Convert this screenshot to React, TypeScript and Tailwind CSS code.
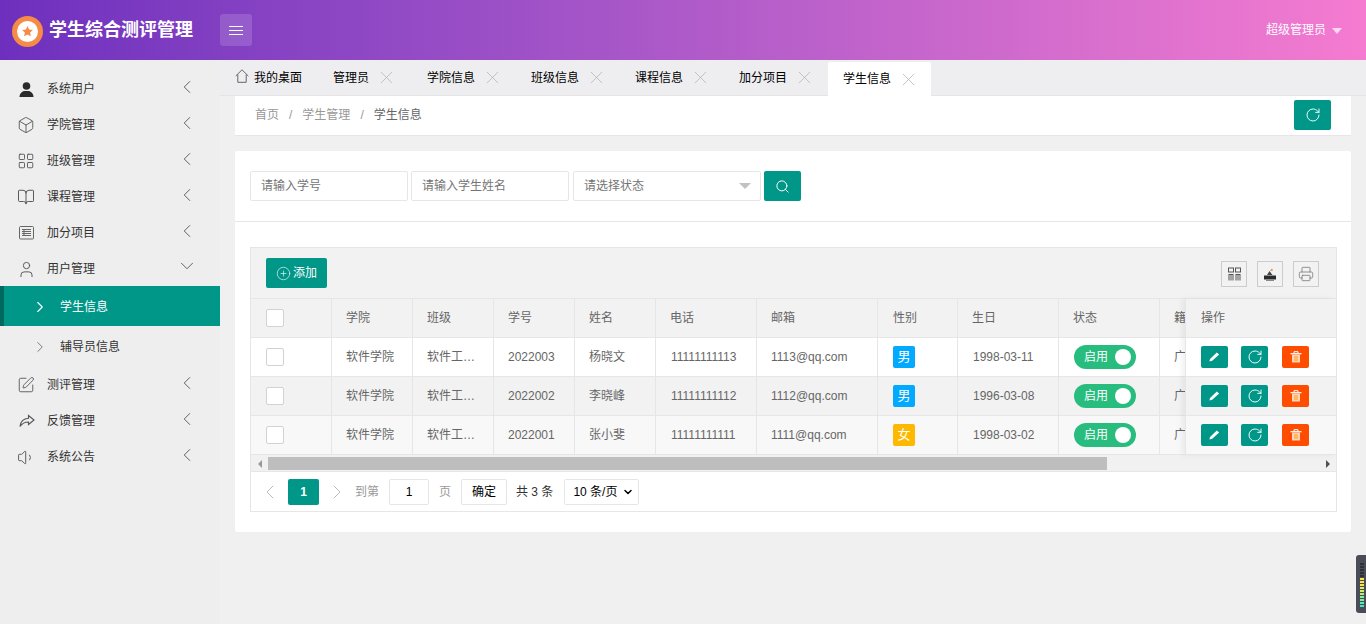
import React from "react";
import { Box, LayoutGrid, BookOpen, User, ChevronLeft, ChevronRight, ChevronDown, SquarePen, Volume1, Search, RotateCw, Printer, CirclePlus, X } from "lucide-react";

const font = "font-['Liberation_Sans','Noto_Sans_CJK_SC',sans-serif]";

function Reply() {
  return (
    <svg width="16" height="16" viewBox="0 0 16 16" fill="none" stroke="#555" strokeWidth="1.1">
      <path d="M9.500 2.500 15 7l-5.500 4.500V9C6 9 3 10.500 1 13.500 1.500 8.500 5 5.500 9.500 5.200z" />
    </svg>
  );
}
function Ledger() {
  return (
    <svg width="15" height="14" viewBox="0 0 15 14" fill="none" stroke="#666" strokeWidth="1">
      <rect x="0.500" y="0.500" width="14" height="12.500" rx="1" />
      <path d="M3 3.500h9M3 5.500h9M3 7.500h9M3 9.500h9M5 3v7" />
    </svg>
  );
}
function SolidUser() {
  return (
    <svg width="15" height="15" viewBox="0 0 15 15" fill="#2b2b2b">
      <circle cx="7.500" cy="4" r="3.800" />
      <path d="M0.500 15c0-3.500 2.500-5.500 4.500-6h5c2 .5 4.500 2.500 4.500 6z" />
    </svg>
  );
}
function Home() {
  return (
    <svg width="14" height="14" viewBox="0 0 14 14" fill="none" stroke="#666" strokeWidth="1">
      <path d="M0.700 7 7 .8 13.300 7M2.800 5.500V13.300H11.200V5.500" />
    </svg>
  );
}
function Cols() {
  return (
    <svg width="13" height="14" viewBox="0 0 13 14" fill="none" stroke="#555" strokeWidth="1">
      <rect x="0.500" y="1" width="5" height="4" />
      <rect x="7.500" y="1" width="5" height="4" />
      <path d="M0.500 7.500h5M7.500 7.500h5M1 8v5.500M3 8v5.500M5 8v5.500M8 8v5.500M10 8v5.500M12 8v5.500" />
    </svg>
  );
}
function Ship() {
  return (
    <svg width="14" height="13" viewBox="0 0 14 13" fill="#2b2b2b">
      <path d="M1 7.500h12v4H1z" />
      <path d="M4 7 6.500 3 9.500 7z" fill="#444" />
      <path d="M7 3 9 0.500l1 2z" fill="#d9822b" />
      <path d="M3 12h8v1H3z" fill="#888" />
    </svg>
  );
}
function Pen() {
  return (
    <svg width="11" height="10" viewBox="0 0 11 10" fill="#fff">
      <path d="M7.800 0.600 10.200 2.600 3.200 8.800 0.400 9.600 1 7z" />
    </svg>
  );
}
function Trash() {
  return (
    <svg width="12" height="12" viewBox="0 0 12 12" fill="none">
      <path d="M0.500 2.700h11" stroke="#fff" strokeWidth="1.200" />
      <path d="M4 2.300V.7h4v1.600" stroke="#fff" />
      <path d="M2 3.500h8V11.500H2z" fill="#ffd3c0" />
      <path d="M4.800 5v5M6 5v5M7.200 5v5" stroke="#ffa914" strokeWidth="0.900" />
    </svg>
  );
}
function Logo() {
  return (
    <svg width="31" height="31" viewBox="0 0 31 31" className="mt-[2px]">
      <circle cx="15.500" cy="15.500" r="15.500" fill="#f58b45" />
      <circle cx="15.500" cy="15.500" r="10.500" fill="#fff" />
      <path d="M15.500 10l1.600 3.500 3.800.4-2.800 2.600.8 3.800-3.400-1.900-3.400 1.900.8-3.800-2.800-2.600 3.800-.4z" fill="#f58b45" />
    </svg>
  );
}

const iconShift = "-ml-[2px]";
const menu = [
  { t: "系统用户", i: <SolidUser /> },
  { t: "学院管理", i: <Box size={18} strokeWidth={1.2} color="#555" className={iconShift} /> },
  { t: "班级管理", i: <LayoutGrid size={18} strokeWidth={1.2} color="#555" className={iconShift} /> },
  { t: "课程管理", i: <BookOpen size={18} strokeWidth={1.3} color="#555" className={iconShift} /> },
  { t: "加分项目", i: <Ledger /> },
];
const menu2 = [
  { t: "测评管理", i: <SquarePen size={18} strokeWidth={1.2} color="#555" className={iconShift} /> },
  { t: "反馈管理", i: <Reply /> },
  { t: "系统公告", i: <Volume1 size={19} strokeWidth={1.2} color="#555" className={iconShift} /> },
];

function MenuItem({ t, i, open }: { t: string; i: React.ReactNode; open?: boolean }) {
  return (
    <div className="flex h-9 items-center pl-[19px] pr-[22px] pt-[2px] text-xs text-[#333]">
      <span className="flex w-[28px] items-center">{i}</span>
      <span className="flex-1">{t}</span>
      {open ? <ChevronDown size={22} strokeWidth={1} color="#555" className="-mt-[6px]" /> : <ChevronLeft size={22} strokeWidth={1} color="#555" className="-mt-[4px]" />}
    </div>
  );
}

const tabs = ["管理员", "学院信息", "班级信息", "课程信息", "加分项目"];

const heads = ["学院", "班级", "学号", "姓名", "电话", "邮箱", "性别", "生日", "状态", "籍贯"];
const rows = [
  { no: "2022003", name: "杨晓文", tel: "11111111113", mail: "1113@qq.com", sex: "男", b: "1998-03-11", bg: "bg-white" },
  { no: "2022002", name: "李晓峰", tel: "11111111112", mail: "1112@qq.com", sex: "男", b: "1996-03-08", bg: "bg-[#f2f2f2]" },
  { no: "2022001", name: "张小斐", tel: "11111111111", mail: "1111@qq.com", sex: "女", b: "1998-03-02", bg: "bg-[#f8f8f8]" },
];
const grid = "grid grid-cols-[81px_81px_81px_81px_81px_101px_121px_80px_101px_101px_176px] h-[39px] border-b border-[#e6e6e6]";
const cell = "flex items-center border-r border-[#e6e6e6] px-[15px] whitespace-nowrap overflow-hidden";
const txt = "flex items-center border-r border-[#e6e6e6] px-[14px] whitespace-nowrap overflow-hidden";

function Check() {
  return <span className="block h-[18px] w-[18px] shrink-0 rounded-[2px] border border-[#d2d2d2] bg-white" />;
}

function ToolBtn({ children }: { children: React.ReactNode }) {
  return <span className="flex h-[26px] w-[26px] items-center justify-center border border-[#ccc]">{children}</span>;
}

function OpBtn({ c, children }: { c: string; children: React.ReactNode }) {
  return <span className={`flex h-[22px] w-[27px] items-center justify-center rounded-[2px] ${c}`}>{children}</span>;
}

export default function App() {
  return (
    <div className={`relative flex h-[624px] w-[1366px] flex-col overflow-hidden bg-[#f0f0f0] ${font}`}>
      <header className="flex h-[60px] shrink-0 items-center bg-gradient-to-r from-[#6e2fbe] to-[#f57bd0] pl-3 pr-[24px] text-white">
        <Logo />
        <span className="ml-[6px] w-[171px] text-[18px] font-bold">学生综合测评管理</span>
        <span className="flex h-8 w-8 items-center justify-center rounded-[3px] bg-white/15">
          <svg width="16" height="9" viewBox="0 0 16 9" stroke="#fff" strokeWidth="1"><path d="M1 .5h14M1 4.500h14M1 8.500h14" /></svg>
        </span>
        <span className="ml-auto text-xs">超级管理员</span>
        <span className="ml-[6px] mt-[2px] h-0 w-0 border-x-[5.500px] border-t-[6px] border-x-transparent border-t-white/70" />
      </header>
      <div className="flex min-h-0 flex-1">
        <aside className="w-[220px] shrink-0 bg-[#eeeeee] pt-[10px]">
          {menu.map((m) => <MenuItem key={m.t} {...m} />)}
          <MenuItem t="用户管理" i={<User size={19} strokeWidth={1.2} color="#555" className={iconShift} />} open />
          <div className="flex h-10 items-center border-l-4 border-[#00695f] bg-[#009688] pl-[27px] pt-[2px] text-xs text-white">
            <ChevronRight size={18} strokeWidth={1.5} />
            <span className="ml-[11px]">学生信息</span>
          </div>
          <div className="flex h-10 items-center pl-[31px] pt-[2px] text-xs text-[#333]">
            <ChevronRight size={18} strokeWidth={1} color="#555" />
            <span className="ml-[11px]">辅导员信息</span>
          </div>
          {menu2.map((m) => <MenuItem key={m.t} {...m} />)}
        </aside>
        <main className="flex min-w-0 flex-1 flex-col">
          <nav className="flex h-9 shrink-0 items-stretch border-b border-[#e4e4e4] bg-[#eeeef0] text-xs text-black">
            <div className="flex w-[98px] items-center pl-[15px]">
              <span className="-mt-[3px] flex"><Home /></span>
              <span className="ml-[5px]">我的桌面</span>
            </div>
            {tabs.map((t) => (
              <div key={t} className={`flex items-center pl-[15px] ${t === "管理员" ? "w-[94px]" : "w-[104px]"}`}>
                <span>{t}</span>
                <X size={21} strokeWidth={0.9} color="#b5b5b5" className="ml-[7px]" />
              </div>
            ))}
            <div className="mt-[2px] flex h-[34px] w-[103px] items-center rounded-t-[2px] bg-white pl-[15px]">
              <span>学生信息</span>
              <X size={21} strokeWidth={0.9} color="#b5b5b5" className="ml-[7px]" />
            </div>
          </nav>
          <div className="flex min-h-0 flex-1 flex-col pl-[15px] pr-[15px]">
            <div className="flex h-[40px] shrink-0 items-center border-b border-[#e6e6e6] bg-white pb-[2px] pl-5 pr-5 text-xs text-[#999]">
              <span>首页</span>
              <span className="mx-[10px]">/</span>
              <span>学生管理</span>
              <span className="mx-[10px]">/</span>
              <span className="text-[#666]">学生信息</span>
              <span className="ml-auto flex h-[30px] w-[37px] items-center justify-center rounded-[2px] bg-[#009688] text-white">
                <RotateCw size={16} strokeWidth={1.4} />
              </span>
            </div>
            <section className="mt-[15px] h-[381px] rounded-[2px] bg-white">
              <div className="flex h-[71px] items-start gap-[3px] border-b border-[#e6e6e6] pl-[15px] pt-5 text-xs text-[#757575]">
                <div className="flex h-[30px] w-[158px] items-center rounded-[2px] border border-[#e6e6e6] pl-[10px]">请输入学号</div>
                <div className="flex h-[30px] w-[158px] items-center rounded-[2px] border border-[#e6e6e6] pl-[10px]">请输入学生姓名</div>
                <div className="ml-[1px] flex h-[30px] w-[188px] items-center rounded-[2px] border border-[#e6e6e6] pl-[10px] pr-[9px]">
                  <span className="flex-1">请选择状态</span>
                  <span className="h-0 w-0 border-x-[6px] border-t-[6px] border-x-transparent border-t-[#c2c2c2]" />
                </div>
                <span className="flex h-[30px] w-[37px] items-center justify-center rounded-[2px] bg-[#009688] text-white">
                  <Search size={15} strokeWidth={1.6} />
                </span>
              </div>
              <div className="relative ml-[15px] mt-[25px] h-[265px] w-[1087px] overflow-hidden border border-[#e6e6e6] text-xs text-[#666]">
                <div className="flex h-[51px] items-center border-b border-[#e6e6e6] bg-[#f2f2f2] pl-[15px] pr-[17px]">
                  <span className="flex h-[30px] w-[61px] items-center justify-center rounded-[2px] bg-[#009688] text-white">
                    <CirclePlus size={15} strokeWidth={1} className="mr-[2px]" />
                    <span>添加</span>
                  </span>
                  <span className="ml-auto mt-[2px] flex gap-[10px]">
                    <ToolBtn><Cols /></ToolBtn>
                    <ToolBtn><Ship /></ToolBtn>
                    <ToolBtn><Printer size={16} strokeWidth={1.2} color="#777" /></ToolBtn>
                  </span>
                </div>
                <div className={`${grid} bg-[#f2f2f2]`}>
                  <div className={cell}><Check /></div>
                  {heads.map((h) => <div key={h} className={h === "性别" ? cell : txt}>{h}</div>)}
                </div>
                {rows.map((r) => (
                  <div key={r.no} className={`${grid} ${r.bg}`}>
                    <div className={cell}><Check /></div>
                    <div className={txt}>软件学院</div>
                    <div className={txt}>软件工…</div>
                    <div className={txt}>{r.no}</div>
                    <div className={txt}>{r.name}</div>
                    <div className={cell}>{r.tel}</div>
                    <div className={txt}>{r.mail}</div>
                    <div className={cell}>
                      <span className={`flex h-[22px] w-[22px] items-center justify-center rounded-[2px] text-[13px] text-white ${r.sex === "男" ? "bg-[#01aaff]" : "bg-[#ffb800]"}`}>{r.sex}</span>
                    </div>
                    <div className={cell}>{r.b}</div>
                    <div className={cell}>
                      <span className="flex h-6 w-[62px] shrink-0 items-center justify-between rounded-full bg-[#28bd7e] pl-[10px] pr-[5px] text-white">
                        <span>启用</span>
                        <span className="h-4 w-4 rounded-full bg-white" />
                      </span>
                    </div>
                    <div className={txt}>广东</div>
                  </div>
                ))}
                <div className="flex h-[17px] items-center border-b border-[#e6e6e6] bg-[#f1f1f1] pt-[1px]">
                  <span className="flex w-[17px] justify-center"><span className="h-0 w-0 border-y-[4px] border-r-[4px] border-y-transparent border-r-[#999]" /></span>
                  <span className="h-[13px] w-[839px] bg-[#bebebe]" />
                  <span className="ml-auto flex w-[17px] justify-center"><span className="h-0 w-0 border-y-[4px] border-l-[4px] border-y-transparent border-l-[#505050]" /></span>
                </div>
                <div className="flex h-[39px] items-center pl-[7px] text-[#999]">
                  <ChevronLeft size={24} strokeWidth={1} color="#bbb" />
                  <span className="ml-[6px] flex h-[26px] w-[31px] items-center justify-center rounded-[2px] bg-[#009688] font-bold text-white">1</span>
                  <ChevronRight size={24} strokeWidth={1} color="#bbb" className="ml-[6px]" />
                  <span className="ml-[6px]">到第</span>
                  <span className="ml-[10px] flex h-[26px] w-[40px] items-center justify-center rounded-[2px] border border-[#e6e6e6] text-black">1</span>
                  <span className="ml-[10px]">页</span>
                  <span className="ml-[10px] flex h-[26px] w-[46px] items-center justify-center rounded-[2px] border border-[#e6e6e6] text-black">确定</span>
                  <span className="ml-[9px] text-[#333]">共 3 条</span>
                  <span className="ml-[11px] flex h-[26px] w-[75px] items-center rounded-[2px] border border-[#e6e6e6] pl-[8px] text-black">
                    <span className="flex-1">10 条/页</span>
                    <ChevronDown size={12} strokeWidth={3} className="mr-[4px]" />
                  </span>
                </div>
                <div className="absolute right-0 top-[51px] w-[151px] border-l border-[#e6e6e6] shadow-[-3px_0_6px_rgba(0,0,0,0.06)]">
                  <div className="flex h-[39px] items-center border-b border-[#e6e6e6] bg-[#f2f2f2] px-[15px]">操作</div>
                  {rows.map((r) => (
                    <div key={r.no} className={`flex h-[39px] items-center border-b border-[#e6e6e6] px-[15px] ${r.bg}`}>
                      <OpBtn c="bg-[#009688]"><Pen /></OpBtn>
                      <span className="ml-[13px]"><OpBtn c="bg-[#009688]"><RotateCw size={16} strokeWidth={1.4} color="#fff" /></OpBtn></span>
                      <span className="ml-[14px]"><OpBtn c="bg-[#ff4d00]"><Trash /></OpBtn></span>
                    </div>
                  ))}
                </div>
              </div>
            </section>
          </div>
        </main>
      </div>
      <div className="absolute bottom-[11px] right-0 flex h-[58px] w-[10px] flex-col justify-end gap-[1px] rounded-l-[3px] bg-[#4a4d58] pb-[6px] pl-[4px]">
        {["#2f3038","#2f3038","#2f3038","#2f3038","#2f3038","#ffe14a","#ffe14a","#f2e850","#e0ec5a","#ccee6a","#b0ee7a","#92ee8a","#74eea0","#58eab0","#44e6b8"].map((c, i) => (
          <span key={i} className="h-[2px] w-[4px] shrink-0" style={{ background: c }} />
        ))}
      </div>
    </div>
  );
}
